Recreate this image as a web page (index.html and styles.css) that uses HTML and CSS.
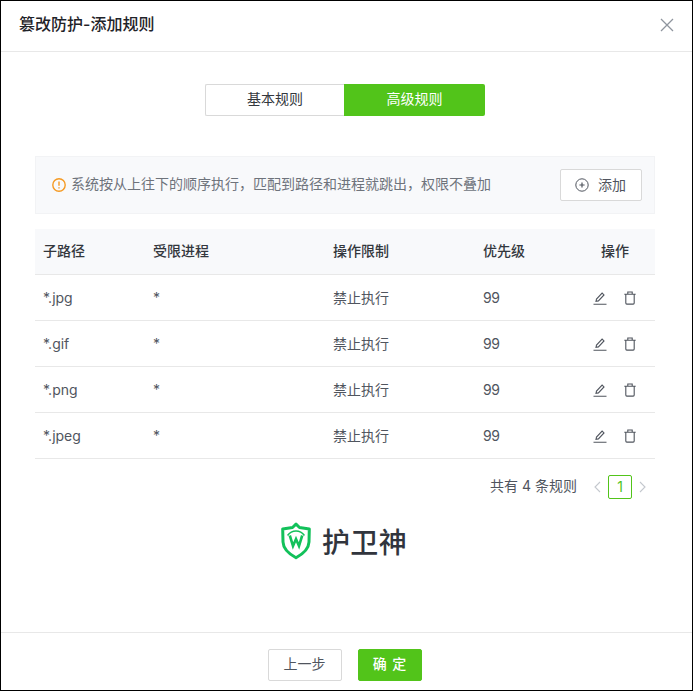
FILE: index.html
```html
<!DOCTYPE html>
<html lang="zh-CN">
<head>
<meta charset="utf-8">
<title>篡改防护-添加规则</title>
<link rel="stylesheet" href="styles.css">
</head>
<body>
<div class="dialog">
  <header class="head">
    <h1 class="title">篡改防护-添加规则</h1>
    <svg class="close" width="14" height="14" viewBox="0 0 14 14"><path d="M1 1l12 12M13 1L1 13" fill="none" stroke="#8f959e" stroke-width="1.3"/></svg>
  </header>
  <main class="body">
    <div class="tabs">
      <div class="tab">基本规则</div>
      <div class="tab tab-on">高级规则</div>
    </div>
    <div class="alert">
      <svg class="warn" width="14" height="14" viewBox="0 0 14 14"><circle cx="7" cy="7" r="6.2" fill="none" stroke="#f59a23" stroke-width="1.4"/><path d="M7 3.400v4.400M7 9.200v1.400" stroke="#f59a23" stroke-width="1.4" fill="none"/></svg>
      <span class="alert-text">系统按从上往下的顺序执行，匹配到路径和进程就跳出，权限不叠加</span>
      <button class="add"><svg width="14" height="14" viewBox="0 0 14 14"><circle cx="7" cy="7" r="6.2" fill="none" stroke="#50555e" stroke-width="1"/><path d="M7 4.400v5.200M4.400 7h5.200" stroke="#50555e" stroke-width="1.2" fill="none"/></svg><span>添加</span></button>
    </div>
    <div class="table">
      <div class="row row-head"><span>子路径</span><span>受限进程</span><span>操作限制</span><span>优先级</span><span class="c-op">操作</span></div>
      <div class="row"><span>*.jpg</span><span>*</span><span>禁止执行</span><span class="num">99</span><span class="c-icons"><svg width="14" height="14" viewBox="0 0 14 14"><path d="M3 10.400l.5-2.400 5.600-6 1.900 1.900-5.600 6zM.5 13.200h13" fill="none" stroke="#50555e" stroke-width="1.1"/></svg><svg width="12" height="14" viewBox="0 0 12 14"><path d="M.3 3.200h11.400M3.800 3V1h4.400v2M1.800 3.200v8.900q0 1 1 1h6.400q1 0 1-1V3.200" fill="none" stroke="#50555e" stroke-width="1.1"/></svg></span></div>
      <div class="row"><span>*.gif</span><span>*</span><span>禁止执行</span><span class="num">99</span><span class="c-icons"><svg width="14" height="14" viewBox="0 0 14 14"><path d="M3 10.400l.5-2.400 5.600-6 1.900 1.900-5.600 6zM.5 13.200h13" fill="none" stroke="#50555e" stroke-width="1.1"/></svg><svg width="12" height="14" viewBox="0 0 12 14"><path d="M.3 3.200h11.400M3.800 3V1h4.400v2M1.800 3.200v8.900q0 1 1 1h6.400q1 0 1-1V3.200" fill="none" stroke="#50555e" stroke-width="1.1"/></svg></span></div>
      <div class="row"><span>*.png</span><span>*</span><span>禁止执行</span><span class="num">99</span><span class="c-icons"><svg width="14" height="14" viewBox="0 0 14 14"><path d="M3 10.400l.5-2.400 5.600-6 1.900 1.900-5.600 6zM.5 13.200h13" fill="none" stroke="#50555e" stroke-width="1.1"/></svg><svg width="12" height="14" viewBox="0 0 12 14"><path d="M.3 3.200h11.400M3.800 3V1h4.400v2M1.800 3.200v8.900q0 1 1 1h6.400q1 0 1-1V3.200" fill="none" stroke="#50555e" stroke-width="1.1"/></svg></span></div>
      <div class="row"><span>*.jpeg</span><span>*</span><span>禁止执行</span><span class="num">99</span><span class="c-icons"><svg width="14" height="14" viewBox="0 0 14 14"><path d="M3 10.400l.5-2.400 5.600-6 1.900 1.900-5.600 6zM.5 13.200h13" fill="none" stroke="#50555e" stroke-width="1.1"/></svg><svg width="12" height="14" viewBox="0 0 12 14"><path d="M.3 3.200h11.400M3.800 3V1h4.400v2M1.800 3.200v8.900q0 1 1 1h6.400q1 0 1-1V3.200" fill="none" stroke="#50555e" stroke-width="1.1"/></svg></span></div>
    </div>
    <div class="pager">
      <span class="total">共有 4 条规则</span>
      <svg width="10" height="12" viewBox="0 0 10 12"><path d="M8 1L3 6l5 5" fill="none" stroke="#c4c8ce" stroke-width="1.1"/></svg>
      <span class="page">1</span>
      <svg width="10" height="12" viewBox="0 0 10 12"><path d="M2 1l5 5-5 5" fill="none" stroke="#c4c8ce" stroke-width="1.1"/></svg>
    </div>
    <div class="brand">
      <svg width="32" height="38" viewBox="0 0 32 38"><path d="M16 2.200l3.500 3.300 9.800 1.500-.3 13c-.3 6.600-5.300 11.600-13 15.700C8.300 31.600 3.300 26.600 3 20L2.700 7l9.800-1.500z" fill="none" stroke="#12c15a" stroke-width="3" stroke-linejoin="round"/><path d="M7.600 13.500C9.800 10.400 12.700 9 16 9s6.200 1.400 8.400 4.500" fill="none" stroke="#12c15a" stroke-width="1.600"/><path d="M9.800 13.500l3.200 10.500 3-7 3 7 3.200-10.500" fill="none" stroke="#12c15a" stroke-width="2.600"/></svg>
      <span class="brand-name">护卫神</span>
    </div>
  </main>
  <footer class="foot">
    <button class="btn">上一步</button>
    <button class="btn btn-primary">确 定</button>
  </footer>
</div>
</body>
</html>
```
FILE: styles.css
```css
* { box-sizing: border-box; }
html, body { margin: 0; padding: 0; }
body { width: 693px; height: 691px; background: #fff; font-family: Inter, "Noto Sans CJK SC", sans-serif; font-size: 14px; line-height: 20px; color: #50555e; }
.dialog { width: 693px; height: 691px; border: 1px solid #000; display: flex; flex-direction: column; background: #fff; }
.head { height: 51px; flex: none; border-bottom: 1px solid #e8e8e8; display: flex; align-items: center; justify-content: space-between; padding: 0 18px 2px; }
.title { margin: 0; font-size: 16px; line-height: 22px; font-weight: 500; color: #1f2329; padding-bottom: 3px; }
.close { display: block; }
.body { flex: 1; padding: 32px 37px 0 34px; }
.tabs { width: 280px; height: 32px; margin: 0 auto; display: flex; }
.tab { width: 139px; flex: none; display: flex; align-items: center; justify-content: center; border: 1px solid #d9d9d9; border-right: 0; border-radius: 2px 0 0 2px; color: #33373d; padding-bottom: 2px; }
.tab-on { width: 141px; background: #52c41a; border: 0; border-radius: 0 2px 2px 0; color: #fff; }
.alert { margin-top: 40px; height: 58px; background: #f8f9fb; border: 1px solid #f2f3f5; display: flex; align-items: center; padding: 0 12px 0 16px; }
.warn { flex: none; margin-right: 5px; }
.alert-text { flex: 1; color: #6e737b; padding-bottom: 2px; }
.add { width: 82px; height: 32px; background: #fff; border: 1px solid #d9d9d9; border-radius: 2px; display: flex; align-items: center; justify-content: center; gap: 9px; font: inherit; color: #50555e; padding: 0 1px 0 0; }
.table { margin-top: 15px; }
.row { height: 46px; display: grid; grid-template-columns: 110px 180px 150px 90px 90px; align-items: center; padding-left: 8px; border-bottom: 1px solid #e8e8e8; }
.row-head > span { padding-bottom: 2px; }
.row-head { background: #f8f9fb; color: #33373d; font-weight: 500; }
.num { letter-spacing: -.4px; }
.c-op { text-align: center; margin-left: -6px; }
.c-icons { display: flex; gap: 17px; margin-left: 20px; align-items: center; }
.c-icons svg { display: block; }
.pager { height: 56px; display: flex; align-items: center; justify-content: flex-end; gap: 6px; padding-right: 7px; }
.total { margin-right: 9px; color: #50555e; padding-bottom: 2px; }
.page { width: 24px; height: 24px; border: 1px solid #52c41a; border-radius: 2px; display: flex; align-items: center; justify-content: center; color: #52c41a; }
.brand { margin-top: 7px; display: flex; align-items: center; justify-content: center; gap: 10px; padding-right: 3px; }
.brand-name { font-size: 28px; line-height: 36px; font-weight: 500; color: #31353d; font-family: "Noto Sans CJK SC", sans-serif; letter-spacing: .3px; }
.foot { height: 58px; flex: none; border-top: 1px solid #e8e8e8; display: flex; justify-content: center; gap: 16px; padding: 16px 4px 0 0; }
.btn { width: 74px; height: 32px; background: #fff; border: 1px solid #d9d9d9; border-radius: 2px; font: inherit; color: #50555e; padding: 0 0 2px; }
.btn-primary { width: 64px; background: #52c41a; border-color: #52c41a; color: #fff; font-weight: 500; word-spacing: 2px; }
```
